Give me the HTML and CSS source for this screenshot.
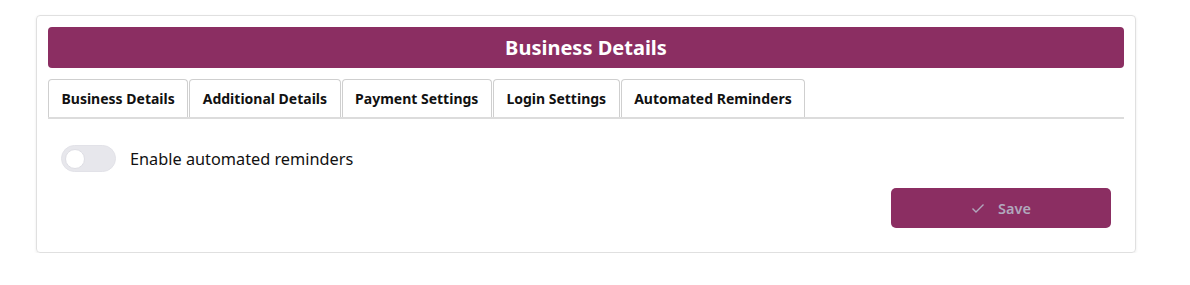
FILE: index.html
```
<!DOCTYPE html>
<html lang="en">
<head>
    <meta charset="UTF-8">
    <meta name="viewport" content="width=device-width, initial-scale=1.0">
    <title>Business Details</title>
    <link rel="stylesheet" href="styles.css">
</head>
<body>
    <div class="card">
        <h1 class="card-title">Business Details</h1>

        <div class="tabs">
            <div class="tab">Business Details</div>
            <div class="tab">Additional Details</div>
            <div class="tab">Payment Settings</div>
            <div class="tab">Login Settings</div>
            <div class="tab">Automated Reminders</div>
        </div>

        <div class="tab-panel">
            <label class="switch-row">
                <span class="switch"><span class="knob"></span></span>
                <span>Enable automated reminders</span>
            </label>

            <div class="actions">
                <button class="save-btn" disabled>
                    <svg width="14" height="14" viewBox="0 0 14 14"><path d="M1.5 7.5 L5 11 L12.5 3.5" fill="none" stroke="currentColor" stroke-width="1.4"/></svg>
                    Save
                </button>
            </div>
        </div>
    </div>
</body>
</html>
```

FILE: styles.css
```
body { margin: 0; padding: 15px 0 0 36px; font-family: 'Noto Sans', 'Open Sans', sans-serif; color: #111; background: white; }
.card { width: 1100px; box-sizing: border-box; padding: 11px 11px 24px 11px; border: 1px solid #e0e0e0; border-radius: 4px; box-shadow: 0 1px 3px rgba(0,0,0,0.08); }
.card-title { margin: 0; height: 41px; line-height: 41px; background-color: #8b2e62; color: white; border-radius: 4px; text-align: center; font-size: 20px; font-weight: bold; }
.tabs { display: flex; gap: 1px; margin-top: 11px; border-bottom: 2px solid #dcdcdc; }
.tab { height: 37px; line-height: 37px; padding: 0 12.5px; border: 1px solid #cfcfcf; border-bottom: none; border-radius: 4px 4px 0 0; font-size: 14px; font-weight: bold; color: #111; white-space: nowrap; }
.tab-panel { padding: 26px 13px 0 13px; }
.switch-row { display: flex; align-items: center; gap: 14px; font-size: 16.3px; }
.switch { width: 55px; height: 27px; border-radius: 14px; background: #e7e7ec; border: 1px solid #e2e2e8; display: flex; align-items: center; padding-left: 3px; box-sizing: border-box; }
.knob { width: 20px; height: 20px; border-radius: 50%; background: white; border: 1px solid #dedee4; box-sizing: border-box; }
.actions { display: flex; justify-content: flex-end; margin-top: 16px; }
.save-btn { width: 220px; height: 40px; border: none; border-radius: 5px; background-color: #8b2e62; color: #b1a8bd; font-family: inherit; font-size: 14.5px; font-weight: 600; display: flex; align-items: center; justify-content: center; gap: 13px; }
```
